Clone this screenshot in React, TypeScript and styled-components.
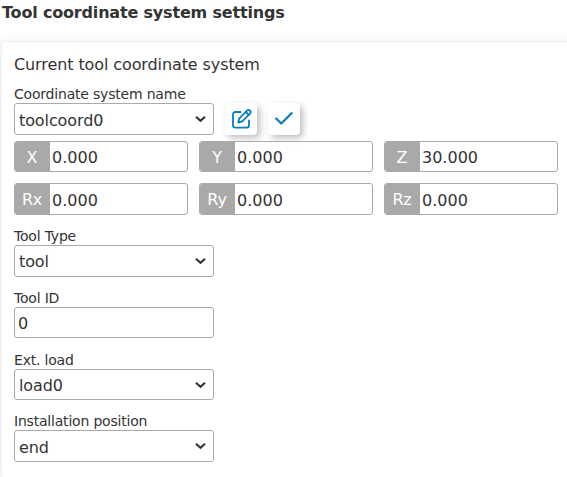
import React from 'react';
import styled, { createGlobalStyle } from 'styled-components';

const GlobalStyle = createGlobalStyle`
  * { box-sizing: border-box; }
  html, body { margin: 0; overflow: hidden; background: #fff; }
  body { font-family: Verdana, "DejaVu Sans", sans-serif; font-size: 16px; color: #333; }
`;

const Page = styled.main`
  height: 477px;
  display: flex;
  flex-direction: column;
  overflow: hidden;
`;

const Title = styled.h1`
  margin: 0;
  height: 41px;
  padding: 1px 0 0 2px;
  font-size: 16px;
  font-weight: 700;
  line-height: 24px;
  letter-spacing: -0.18px;
  white-space: nowrap;
`;

const Card = styled.section`
  flex: 1;
  margin: 0 -20px 0 1px;
  padding: 11px 0 0 12px;
  border: 1px solid #ebeef5;
  border-bottom: 0;
  border-radius: 4px 0 0 0;
  background: #fff;
  box-shadow: 0 2px 12px rgba(0, 0, 0, 0.1);
`;

const Heading = styled.h2`
  margin: 0 0 8px;
  font-size: 16px;
  font-weight: 400;
  line-height: 24px;
  letter-spacing: -0.1px;
  white-space: nowrap;
`;

const Field = styled.div<{ $height: number }>`
  height: ${(p) => p.$height}px;
`;

const Label = styled.label`
  display: block;
  height: 18px;
  font-size: 14px;
  line-height: 18px;
  letter-spacing: -0.2px;
  white-space: nowrap;
`;

const Line = styled.div`
  display: flex;
`;

const Control = styled.div<{ $height?: number; $inset?: number }>`
  display: flex;
  align-items: center;
  justify-content: space-between;
  width: 200px;
  height: ${(p) => p.$height ?? 32}px;
  padding: 0 7px 0 ${(p) => p.$inset ?? 4}px;
  border: 1px solid #aaa;
  border-radius: 3px;
  font-size: 16px;
`;

const Value = styled.span<{ $drop?: number }>`
  padding-top: ${(p) => p.$drop ?? 2}px;
  letter-spacing: -0.1px;
`;

const IconButton = styled.button`
  display: flex;
  align-items: center;
  justify-content: center;
  width: 32px;
  height: 32px;
  margin-left: 11px;
  padding: 0;
  border: 0;
  border-radius: 4px;
  background: #fff;
  color: #0a7cc4;
  box-shadow: 3px 3px 6px rgba(0, 0, 0, 0.25);
`;

const Axes = styled.div`
  display: grid;
  grid-template-columns: repeat(3, 174px);
  grid-template-rows: 31px 32px;
  gap: 11px;
  height: 86px;
`;

const Axis = styled.div`
  display: flex;
  align-items: stretch;
  border: 1px solid #aaa;
  border-radius: 3px;
  overflow: hidden;
`;

const AxisName = styled.span`
  display: flex;
  align-items: center;
  justify-content: center;
  width: 35px;
  padding: 1px 1px 0 0;
  background: #a9a9a9;
  color: #fff;
  letter-spacing: -0.2px;
`;

const AxisValue = styled.span`
  display: flex;
  align-items: center;
  padding: 2px 0 0 2px;
`;

const Chevron = () => (
  <svg width="11" height="8" viewBox="0 0 11 8" fill="none">
    <path d="M1 1.700 5.500 5.700 10 1.700" stroke="#333" strokeWidth="2.200" />
  </svg>
);

const EditIcon = () => (
  <svg width="22" height="22" viewBox="-2 0 22 22" fill="none" stroke="currentColor" strokeWidth="1.8" strokeLinecap="round" strokeLinejoin="round">
    <path d="M8.500 4H3.500Q1 4 1 6.300v11q0 2.300 2.300 2.300H14.700q2.300 0 2.300-2.300V12.500" />
    <path d="m7.300 10.300 7.700-7.700q1.500-1.300 3 0 1.300 1.500 0 3l-7.700 7.700-4.100 1.300Z" />
    <path d="m13.800 4 3 3" />
  </svg>
);

const CheckIcon = () => (
  <svg width="20" height="16" viewBox="0 0 20 16" fill="none">
    <path d="m1.500 7 5.800 5.500L18.300 1.500" stroke="currentColor" strokeWidth="2.200" />
  </svg>
);

const axes = [
  ['X', '0.000'], ['Y', '0.000'], ['Z', '30.000'],
  ['Rx', '0.000'], ['Ry', '0.000'], ['Rz', '0.000'],
];

export default function App() {
  return (
    <Page>
      <GlobalStyle />
      <Title>Tool coordinate system settings</Title>
      <Card>
        <Heading>Current tool coordinate system</Heading>
        <Field $height={56}>
          <Label>Coordinate system name</Label>
          <Line>
            <Control><Value>toolcoord0</Value><Chevron /></Control>
            <IconButton aria-label="Edit"><EditIcon /></IconButton>
            <IconButton aria-label="Confirm"><CheckIcon /></IconButton>
          </Line>
        </Field>
        <Axes>
          {axes.map(([name, value]) => (
            <Axis key={name}><AxisName>{name}</AxisName><AxisValue>{value}</AxisValue></Axis>
          ))}
        </Axes>
        <Field $height={62}><Label>Tool Type</Label><Control><Value $drop={0}>tool</Value><Chevron /></Control></Field>
        <Field $height={62}><Label>Tool ID</Label><Control $height={31} $inset={3}><Value>0</Value></Control></Field>
        <Field $height={61}><Label>Ext. load</Label><Control $height={31}><Value>load0</Value><Chevron /></Control></Field>
        <Field $height={60}><Label>Installation position</Label><Control><Value>end</Value><Chevron /></Control></Field>
      </Card>
    </Page>
  );
}
